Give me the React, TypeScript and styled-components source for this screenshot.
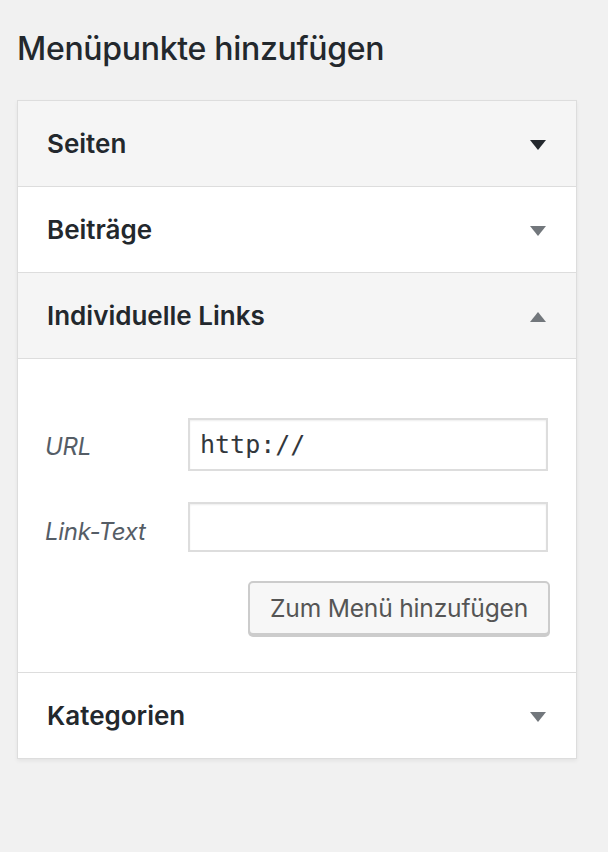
import React from "react";
import styled, { createGlobalStyle } from "styled-components";

const GlobalStyle = createGlobalStyle`
  html, body {
    margin: 0;
    padding: 0;
    background: #f1f1f1;
  }
  body {
    font-family: Inter, "Noto Sans", Roboto, sans-serif;
    color: #23282d;
  }
  * { box-sizing: border-box; }
`;

const Page = styled.div`
  padding: 29px 31px 60px 17px;
  min-height: 852px;
`;

const Title = styled.h2`
  margin: 0 0 31px 0;
  font-size: 32px;
  line-height: 40px;
  font-weight: 500;
  letter-spacing: -0.3px;
  color: #23282d;
`;

const Panel = styled.div`
  width: 560px;
  border: 1px solid #dddddd;
  background: #fff;
  box-shadow: 0 2px 4px rgba(0, 0, 0, 0.06);
`;

const SectionHeader = styled.div<{ $shaded: boolean; $last?: boolean }>`
  display: flex;
  align-items: center;
  justify-content: space-between;
  height: ${(p) => (p.$last ? 85 : 86)}px;
  padding: 0 30px 0 29px;
  background: ${(p) => (p.$shaded ? "#f5f5f5" : "#ffffff")};
  border-bottom: ${(p) => (p.$last ? "none" : "1px solid #dddddd")};
`;

const SectionTitle = styled.h3`
  margin: 0;
  font-size: 26px;
  font-weight: 600;
  line-height: 30px;
  color: #23282d;
  letter-spacing: 0px;
`;

const Arrow = styled.svg<{ $dark: boolean }>`
  width: 16px;
  height: 10px;
  fill: ${(p) => (p.$dark ? "#23282d" : "#72777c")};
  margin-top: 3px;
`;

const Content = styled.div`
  padding: 59px 28px 37px 27px;
  border-bottom: 1px solid #dddddd;
  display: flex;
  flex-direction: column;
`;

const FieldRow = styled.div<{ $gap: number }>`
  display: grid;
  grid-template-columns: 143px 1fr;
  align-items: center;
  margin-bottom: ${(p) => p.$gap}px;
`;

const Label = styled.label<{ $drop: number }>`
  font-style: italic;
  font-size: 24px;
  color: #555d66;
  letter-spacing: -0.3px;
  padding-top: ${(p) => p.$drop}px;
`;

const Input = styled.input<{ $h: number }>`
  height: ${(p) => p.$h}px;
  width: 100%;
  border: 2px solid #dddddd;
  box-shadow: inset 0 1px 2px rgba(0, 0, 0, 0.07);
  background: #fff;
  padding: 0 10px;
  font-family: "DejaVu Sans Mono", "Liberation Mono", monospace;
  font-size: 25px;
  color: #32373c;
  outline: none;
`;

const ButtonRow = styled.div`
  display: flex;
  justify-content: flex-end;
  margin-right: -2px;
`;

const Button = styled.button`
  height: 54px;
  padding: 0 20px;
  border: 2px solid #cccccc;
  border-radius: 5px;
  background: #f7f7f7;
  box-shadow: 0 2px 0 #cccccc;
  font-family: Inter, "Noto Sans", Roboto, sans-serif;
  font-size: 24.6px;
  color: #555555;
  letter-spacing: -0.2px;
`;

const ArrowIcon = ({ up, dark }: { up?: boolean; dark?: boolean }) => (
  <Arrow $dark={!!dark} viewBox="0 0 16 10">
    {up ? <polygon points="0,10 16,10 8,0" /> : <polygon points="0,0 16,0 8,10" />}
  </Arrow>
);

export default function App() {
  return (
    <>
      <GlobalStyle />
      <Page>
        <Title>Menüpunkte hinzufügen</Title>
        <Panel>
          <SectionHeader $shaded>
            <SectionTitle>Seiten</SectionTitle>
            <ArrowIcon dark />
          </SectionHeader>
          <SectionHeader $shaded={false}>
            <SectionTitle>Beiträge</SectionTitle>
            <ArrowIcon />
          </SectionHeader>
          <SectionHeader $shaded>
            <SectionTitle>Individuelle Links</SectionTitle>
            <ArrowIcon up />
          </SectionHeader>
          <Content>
            <FieldRow $gap={31}>
              <Label $drop={4}>URL</Label>
              <Input $h={53} defaultValue="http://" />
            </FieldRow>
            <FieldRow $gap={29}>
              <Label $drop={8}>Link-Text</Label>
              <Input $h={50} defaultValue="" />
            </FieldRow>
            <ButtonRow>
              <Button>Zum Menü hinzufügen</Button>
            </ButtonRow>
          </Content>
          <SectionHeader $shaded={false} $last>
            <SectionTitle>Kategorien</SectionTitle>
            <ArrowIcon />
          </SectionHeader>
        </Panel>
      </Page>
    </>
  );
}
